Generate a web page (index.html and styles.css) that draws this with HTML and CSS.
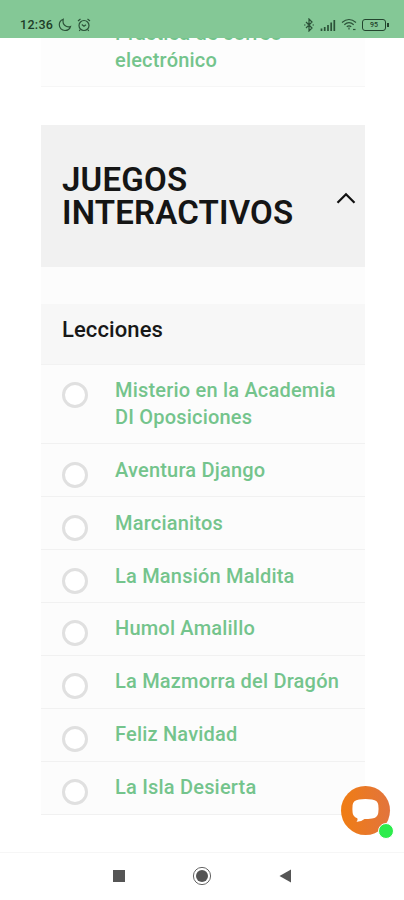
FILE: index.html
```
<!DOCTYPE html>
<html lang="es">
<head>
<meta charset="utf-8">
<title>Juegos interactivos</title>
<link rel="stylesheet" href="styles.css">
</head>
<body>
<div class="phone">
  <header class="status">
    <span class="clock">12:36</span>
    <svg class="moon" width="14" height="14" viewBox="0 0 14 14"><path d="M5.2 1.3C2.8 2.2 1.3 4.300 1.300 6.800c0 3.200 2.500 5.700 5.700 5.700 2.600 0 4.800-1.600 5.500-4-3.900 1.300-8.500-1.500-7.300-7.200z"/></svg>
    <svg class="alarm" width="14" height="14" viewBox="0 0 14 14"><circle cx="7" cy="7.500" r="5"/><path d="M1 3l2.500-2M13 3l-2.500-2M4.800 6.500L7 8.300l2-1.500M3.300 11.500l-1 1.500M10.700 11.500l1 1.500"/></svg>
    <span class="spacer"></span>
    <svg class="bt" width="12" height="14" viewBox="0 0 12 14"><path d="M3 4l6 6-3 3V1l3 3-6 6M1 7h1.500M9.500 7H11"/></svg>
    <svg class="signal" width="16" height="12" viewBox="0 0 16 12"><path d="M1.500 12V9.500M4.700 12V8M8 12V6M11.200 12V3.500M14.300 12V1"/></svg>
    <svg class="wifi" width="16" height="13" viewBox="0 0 16 13"><path d="M1 4.500q7-6 14 0M3.300 6.700q4.700-4 9.400 0M5.800 8.800q2.200-2 4.400 0M8 9.500v2"/><path d="M12 11.500h2.500"/></svg>
    <span class="battery">95</span>
  </header>

  <main class="page">
    <section class="previous">
      <a class="link">Práctica de correo electrónico</a>
    </section>
    <section class="module">
      <div class="module-head">
        <h1>JUEGOS<br>INTERACTIVOS</h1>
        <svg class="chevron" width="20" height="12" viewBox="0 0 20 12"><path d="M1.500 10.800L10 2.200l8.500 8.600"/></svg>
      </div>
      <h2>Lecciones</h2>
      <ul>
        <li><i class="ring"></i><a class="link">Misterio en la Academia<br>DI Oposiciones</a></li>
        <li><i class="ring"></i><a class="link">Aventura Django</a></li>
        <li><i class="ring"></i><a class="link">Marcianitos</a></li>
        <li><i class="ring"></i><a class="link">La Mansión Maldita</a></li>
        <li><i class="ring"></i><a class="link">Humol Amalillo</a></li>
        <li><i class="ring"></i><a class="link">La Mazmorra del Dragón</a></li>
        <li><i class="ring"></i><a class="link">Feliz Navidad</a></li>
        <li><i class="ring"></i><a class="link">La Isla Desierta</a></li>
      </ul>
    </section>
  </main>

  <nav class="nav">
    <svg width="20" height="20" viewBox="0 0 20 20"><path d="M4 4h12v12H4z"/></svg>
    <svg width="20" height="20" viewBox="0 0 20 20"><circle cx="10" cy="10" r="6"/><circle class="outer" cx="10" cy="10" r="8.600"/></svg>
    <svg width="20" height="20" viewBox="0 0 20 20"><path d="M3.500 10L15 3.500v13z"/></svg>
  </nav>

  <div class="chat">
    <svg width="48" height="48" viewBox="0 0 48 48"><path d="M18 13.500Q24.500 12.700 31 13.500C35 14 37 16 37.300 19Q37.800 23 37.300 26.500C36.800 30.500 34.500 32 31 32.500Q27 33 23.500 33Q20 36 15.500 35.800Q17.300 34 16.300 32.200C13 31 11.800 29 11.600 26.500Q11.200 23 11.600 19C12 16 14 14 18 13.500z"/></svg>
    <span class="online"></span>
  </div>
</div>
</body>
</html>
```
FILE: styles.css
```
* { box-sizing: border-box; }
body { margin: 0; background: #fff; font-family: Roboto, sans-serif; }
.phone { position: relative; width: 404px; height: 900px; overflow: hidden; display: flex; flex-direction: column; }

.status { flex: none; height: 38px; padding: 11px 16px 0 20px; display: flex; align-items: center; background: #84c896; color: #1e3d28; position: relative; z-index: 1; }
.status svg { flex: none; fill: none; stroke: #2b5238; stroke-width: 1.200; }
.clock { font-size: 12.500px; font-weight: 500; letter-spacing: .3px; width: 38px; }
.alarm { margin-left: 5px; }
.spacer { flex: 1; }
.status .bt { margin-right: 5px; }
.status .signal { stroke-width: 1.700; margin-right: 5px; }
.battery { position: relative; width: 24px; height: 12px; margin: 0 2px 0 5px; border: 1.500px solid #23452e; border-radius: 3px; font-size: 7px; line-height: 10px; font-weight: 500; text-align: center; }
.battery::after { content: ""; position: absolute; right: -4px; top: 3px; width: 2px; height: 4px; background: #23452e; }

.page { flex: 1; min-height: 0; padding: 0 39px 0 41px; }
.link { color: #74c48c; font-size: 20px; line-height: 26.500px; font-weight: 500; letter-spacing: .2px; }
.previous { margin-top: -18px; height: 67px; padding: 0 60px 0 74px; background: #fdfdfd; border-bottom: 1px solid #f6f6f6; }
.previous .link { display: block; }

.module { margin-top: 38px; background: #fcfcfc; }
.module-head { height: 142px; padding: 0 9px 0 21px; display: flex; align-items: center; justify-content: space-between; background: #f1f1f1; }
h1 { margin: 0; font-size: 33px; line-height: 33.500px; font-weight: 600; letter-spacing: .2px; color: #151515; }
.chevron { flex: none; margin-top: 4px; fill: none; stroke: #111; stroke-width: 2.200; }
h2 { margin: 37px 0 0; height: 61px; padding: 12px 21px 0; background: #f7f7f7; border-bottom: 1px solid #f2f2f2; font-size: 22px; line-height: 28px; font-weight: 500; letter-spacing: .1px; color: #181818; }
ul { list-style: none; margin: 0; padding: 0; }
li { display: flex; align-items: flex-start; gap: 27px; padding: 12.400px 10px 13px 21px; border-bottom: 1px solid #f1f1f1; }
.ring { flex: none; width: 26px; height: 26px; margin: 5px 0 -5px; border: 3px solid #e0e0e0; border-radius: 50%; background: #fff; }

.nav { flex: none; height: 48px; border-top: 1px solid #f6f6f6; background: #fff; display: flex; justify-content: center; gap: 63.500px; padding-top: 13px; }
.nav svg { fill: #555; }
.nav .outer { fill: none; stroke: #666; stroke-width: 1; }

.chat { position: absolute; left: 341px; top: 786px; width: 49px; height: 49px; border-radius: 50%; background: linear-gradient(90deg, #f07d13, #e2743d); }
.chat svg { display: block; fill: #fff; }
.online { position: absolute; left: 37px; top: 37px; width: 16px; height: 16px; border: 1.500px solid #fff; border-radius: 50%; background: #2cec4c; }
```
